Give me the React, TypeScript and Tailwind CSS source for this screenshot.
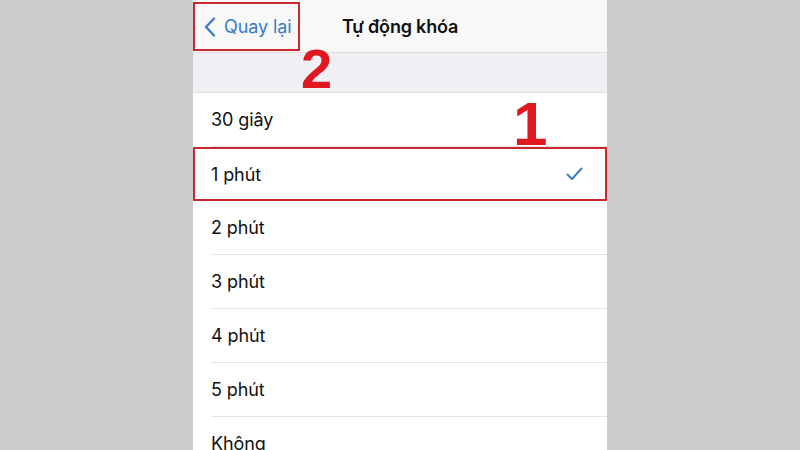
import React from 'react';

const options = ['30 giây', '1 phút', '2 phút', '3 phút', '4 phút', '5 phút', 'Không'];
const selected = '1 phút';

function Check() {
  return (
    <svg width="17" height="14" viewBox="0 0 17 14" fill="none">
      <path d="M1.5 7.5 L6 12 L15.5 1.5" stroke="#3b7cc9" strokeWidth="2" strokeLinecap="round" strokeLinejoin="round" />
    </svg>
  );
}

function Chevron() {
  return (
    <svg width="12" height="20" viewBox="0 0 12 20" fill="none">
      <path d="M10 1.5 L2 10 L10 18.5" stroke="#3b7cc9" strokeWidth="2.4" strokeLinecap="round" strokeLinejoin="round" />
    </svg>
  );
}

export default function App() {
  return (
    <div className="w-[800px] h-[450px] bg-[#cccccc] flex justify-center overflow-hidden font-['Inter',sans-serif]">
      <div className="w-[414px] h-full bg-[#efeff4] flex flex-col relative">
        {/* nav bar */}
        <div className="h-[53px] shrink-0 bg-[#f8f8f8] border-b border-[#dcdcdc] flex items-center relative">
          <div className="h-[49px] w-[107px] mt-[1px] border-2 border-[#c8282e] flex items-center pl-[9px] gap-[8px]">
            <Chevron />
            <span className="text-[18px] text-[#3b7cc9] tracking-[-0.1px]">Quay lại</span>
          </div>
          <div className="absolute inset-0 flex items-center justify-center pointer-events-none">
            <span className="text-[18px] font-semibold text-[#111] tracking-[-0.2px]">Tự động khóa</span>
          </div>
        </div>

        <div className="h-[40px] shrink-0 border-b border-[#dedede]" />

        {/* options list */}
        <div className="bg-white flex flex-col">
          {options.map((opt) => (
            <div
              key={opt}
              className={
                opt === selected
                  ? 'h-[54px] shrink-0 flex items-center border-2 border-[#c8282e] pl-[16px] pr-[22px]'
                  : 'h-[54px] shrink-0 flex items-center pl-[18px]'
              }
            >
              <div
                className={
                  opt === selected
                    ? 'flex-1 h-full flex items-center justify-between'
                    : 'flex-1 h-full flex items-center justify-between border-b border-[#e3e3e3]'
                }
              >
                <span className="text-[18px] text-[#111] tracking-[-0.1px]">{opt}</span>
                {opt === selected && <Check />}
              </div>
            </div>
          ))}
        </div>

        {/* step numbers */}
        <span className="absolute left-[108px] top-[41px] text-[56px] leading-none font-bold text-[#e0181f] font-['Liberation_Sans',sans-serif]">2</span>
        <span className="absolute left-[320px] top-[93px] text-[62px] leading-none font-bold text-[#e0181f] font-['Liberation_Sans',sans-serif]">1</span>
      </div>
    </div>
  );
}
